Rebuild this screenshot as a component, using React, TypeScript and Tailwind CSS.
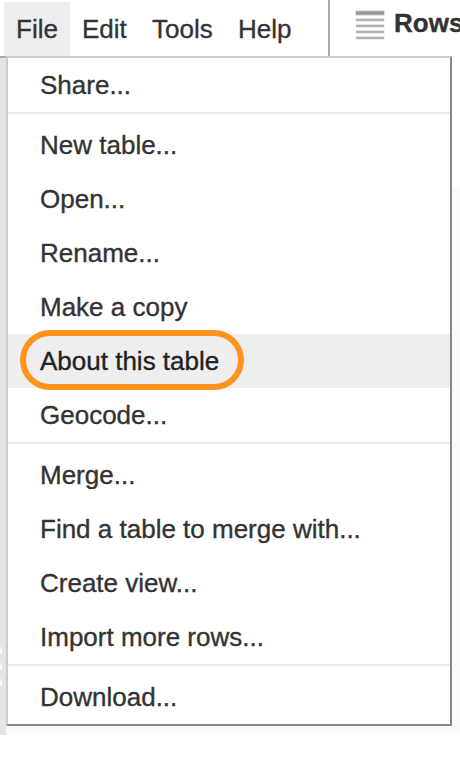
const groups: string[][] = [
  ['Share...'],
  ['New table...', 'Open...', 'Rename...', 'Make a copy', 'About this table', 'Geocode...'],
  ['Merge...', 'Find a table to merge with...', 'Create view...', 'Import more rows...'],
  ['Download...'],
];

function RowsIcon() {
  return (
    <svg className="mt-2.5 h-[30px] w-[30px] shrink-0" viewBox="0 0 30 30">
      <rect x="0.5" y="0.5" width="29" height="5" fill="#c8c8c8" />
      <rect x="1" y="1.4" width="28" height="3.2" fill="#979797" />
      {[8.9, 14.9, 20.9, 26.9].map((y) => (
        <g key={y}>
          <rect x="0.5" y={y - 0.7} width="29" height="3.4" fill="#e2e2e2" />
          <rect x="1" y={y} width="28" height="2" fill="#b0b0b0" />
        </g>
      ))}
    </svg>
  );
}

function MenuItem({ label }: { label: string }) {
  const active = label === 'About this table';
  return (
    <li
      className={`relative h-[54px] pl-8 text-[26px] leading-[54px] whitespace-nowrap ${
        active ? 'bg-[#eeeeee] text-[#222222]' : 'text-[#333333]'
      }`}
    >
      {label}
      {active && (
        <span className="absolute -top-1 left-3 h-[60px] w-[224px] rounded-full border-[6px] border-[#ff931e]" />
      )}
    </li>
  );
}

export default function App() {
  return (
    <div className="relative h-[776px] w-[460px] overflow-hidden bg-white font-['Liberation_Sans',Arial,sans-serif] text-[26px] text-[#333333] [-webkit-text-stroke:0.35px_currentColor]">
      <header className="flex h-14">
        <nav className="flex h-14 w-[330px] shrink-0 border-r-2 border-[#aaaaaa] pt-0.5 pl-1 leading-[54px]">
          <span className="w-[66px] bg-[#eeeeee] pl-3">File</span>
          <span className="w-[70px] pl-3">Edit</span>
          <span className="w-[86px] pl-3">Tools</span>
          <span className="pl-3">Help</span>
        </nav>
        <div className="flex pl-[25px]">
          <RowsIcon />
          <b className="ml-[9px] leading-[46px]">Rows</b>
        </div>
      </header>
      <main className="flex h-[679px]">
        <aside className="w-1.5 border-t-2 border-[#aaaaaa] bg-[#e4e4e4] pt-[587px]">
          <div className="flex flex-col gap-2">
            <i className="h-2 w-0.5 bg-linear-to-b from-[#dfe3fb] to-white" />
            <i className="h-2 w-0.5 bg-linear-to-b from-[#dfe3fb] to-white" />
            <i className="h-2 w-0.5 bg-linear-to-b from-[#dfe3fb] to-white" />
          </div>
        </aside>
        <div className="flex-1 pt-[131px]">
          <div className="h-full bg-[#fafafa]" />
        </div>
      </main>
      <div className="absolute top-14 left-1.5 h-[670px] w-[446px] border-2 border-t-[#cccccc] border-r-[#888888] border-b-[#888888] border-l-[#cccccc] bg-white">
        {groups.map((items, i) => (
          <ul key={items[0]} className={i > 0 ? 'border-t-2 border-[#ebebeb] pt-1' : ''}>
            {items.map((label) => (
              <MenuItem key={label} label={label} />
            ))}
          </ul>
        ))}
      </div>
    </div>
  );
}
